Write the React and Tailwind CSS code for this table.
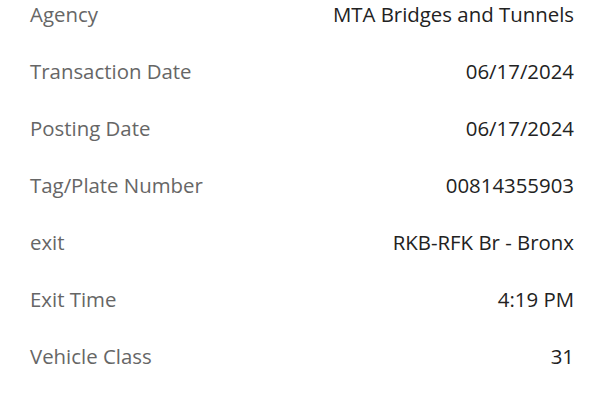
const rows = [
  ['Agency', 'MTA Bridges and Tunnels'],
  ['Transaction Date', '06/17/2024'],
  ['Posting Date', '06/17/2024'],
  ['Tag/Plate Number', '00814355903'],
  ['exit', 'RKB-RFK Br - Bronx'],
  ['Exit Time', '4:19 PM'],
  ['Vehicle Class', '31'],
]

export default function App() {
  return (
    <div className="w-[604px] h-[400px] overflow-hidden bg-white font-[family-name:'Open_Sans',sans-serif]">
      <div className="-mt-[14px] px-[30px]">
        {rows.map(([label, value]) => (
          <div key={label} className="flex h-[57px] items-center justify-between text-[20.4px]">
            <span className="text-[#666666]">{label}</span>
            <span className="text-[#222222]">{value}</span>
          </div>
        ))}
      </div>
    </div>
  )
}
